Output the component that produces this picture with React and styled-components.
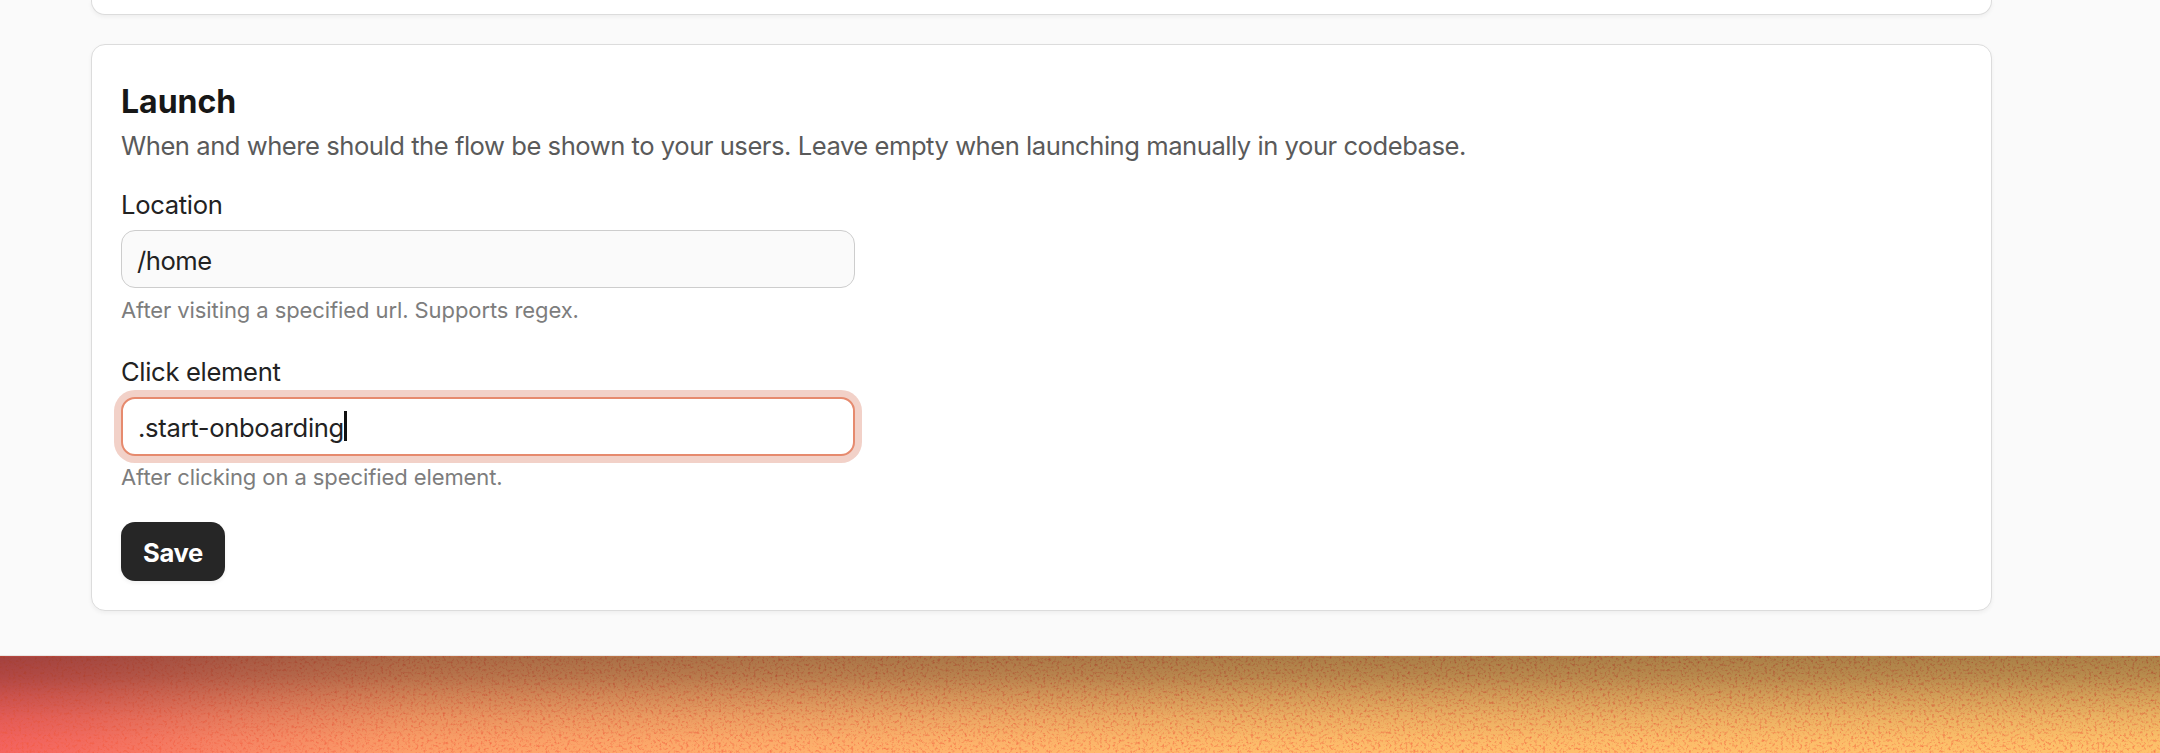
import React from "react";
import styled, { createGlobalStyle } from "styled-components";

const GlobalStyle = createGlobalStyle`
  *, *::before, *::after { box-sizing: border-box; }
  body {
    margin: 0;
    overflow: hidden;
    font-family: Inter, "Liberation Sans", sans-serif;
    color: #222;
  }
`;

const Desktop = styled.div`
  position: relative;
  display: flex;
  flex-direction: column;
  width: 2160px;
  height: 753px;
  overflow: hidden;
`;

const Window = styled.main`
  display: flex;
  flex-direction: column;
  gap: 29px;
  height: 656px;
  padding: 0 168px 0 91px;
  background: #fafafa;
  border-bottom: 1px solid #e9e6e4;
`;

const Card = styled.section`
  background: #fff;
  border: 1px solid #dcdcdc;
  border-radius: 14px;
  box-shadow: 0 2px 4px rgba(0, 0, 0, 0.05);
`;

const PreviousCard = styled(Card)`
  height: 15px;
  border-top: 0;
  border-radius: 0 0 14px 14px;
`;

const LaunchCard = styled(Card)`
  display: flex;
  flex-direction: column;
  align-items: flex-start;
  height: 567px;
  padding: 37px 29px 0;
`;

const Title = styled.h2`
  margin: 0;
  font-size: 32px;
  font-weight: 700;
  line-height: 40px;
  letter-spacing: 0;
  color: #171717;
`;

const Description = styled.p`
  margin: 3px 0 0;
  padding-top: 1px;
  font-size: 25.6px;
  line-height: 40px;
  letter-spacing: -0.47px;
  color: #5a5a5a;
  white-space: nowrap;
`;

const Field = styled.div`
  display: flex;
  flex-direction: column;
  margin-top: ${(p) => p.$gap}px;
`;

const Label = styled.label`
  font-size: 25.6px;
  line-height: 36px;
  letter-spacing: -0.33px;
`;

const TextBox = styled.div`
  display: flex;
  align-items: center;
  width: 734px;
  height: ${(p) => (p.$focused ? 59 : 58)}px;
  margin-top: 7px;
  padding: ${(p) => (p.$focused ? "1px 15px 0" : "3px 15px 0")};
  border: ${(p) => (p.$focused ? "2px solid #e68a6e" : "1px solid #cdcdcd")};
  border-radius: 14px;
  background: ${(p) => (p.$focused ? "#fff" : "#fafafa")};
  box-shadow: ${(p) => (p.$focused ? "0 0 0 7px #f2d1c8" : "none")};
  font-size: 25.6px;
  letter-spacing: ${(p) => (p.$focused ? "-0.32px" : "-0.45px")};
`;

const Caret = styled.span`
  width: 3px;
  height: 30px;
  margin: -3px 0 0 -0.5px;
  background: #111;
`;

const Hint = styled.p`
  margin: ${(p) => (p.$focused ? 6 : 7)}px 0 0;
  font-size: 22px;
  line-height: 30px;
  letter-spacing: -0.09px;
  color: #7d7d7d;
`;

const SaveButton = styled.button`
  width: 104px;
  height: 59px;
  margin-top: 30px;
  padding: 1px 0 0;
  border: 0;
  border-radius: 14px;
  background: #262626;
  box-shadow: 0 2px 4px rgba(0, 0, 0, 0.06);
  color: #fff;
  font: 700 25.6px Inter, "Liberation Sans", sans-serif;
  letter-spacing: -0.3px;
`;

const Wallpaper = styled.div`
  position: relative;
  height: 97px;
  background: linear-gradient(
    98deg,
    #f5625e 0,
    #f66c60 90px,
    #f98665 240px,
    #fd9f68 420px,
    #ffb06c 800px,
    #ffbd6b 1250px,
    #ffc36b 2160px
  );
`;

const Grain = styled.svg`
  display: block;
  width: 2160px;
  height: 97px;
`;

const WindowShadow = styled.div`
  position: absolute;
  inset: 0;
  border-top: 1px solid rgba(60, 20, 10, 0.35);
  background: linear-gradient(
    rgba(0, 0, 0, 0.33) 0,
    rgba(0, 0, 0, 0.28) 20%,
    rgba(0, 0, 0, 0.17) 42%,
    rgba(0, 0, 0, 0.08) 63%,
    rgba(0, 0, 0, 0.02) 85%,
    rgba(0, 0, 0, 0) 100%
  );
`;

function FormField({ gap, label, value, hint, focused }) {
  return (
    <Field $gap={gap}>
      <Label>{label}</Label>
      <TextBox $focused={focused}>
        <span>{value}</span>
        {focused && <Caret />}
      </TextBox>
      <Hint $focused={focused}>{hint}</Hint>
    </Field>
  );
}

export default function App() {
  return (
    <Desktop>
      <GlobalStyle />
      <Window>
        <PreviousCard />
        <LaunchCard>
          <Title>Launch</Title>
          <Description>
            When and where should the flow be shown to your users. Leave empty when launching manually in your codebase.
          </Description>
          <FormField gap={21} label="Location" value="/home" hint="After visiting a specified url. Supports regex." />
          <FormField
            gap={29}
            label="Click element"
            value=".start-onboarding"
            hint="After clicking on a specified element."
            focused
          />
          <SaveButton type="button">Save</SaveButton>
        </LaunchCard>
      </Window>
      <Wallpaper>
        <Grain aria-hidden="true">
          <filter id="grain" x="0" y="0" width="100%" height="100%" colorInterpolationFilters="sRGB">
            <feTurbulence type="fractalNoise" baseFrequency="0.37" numOctaves="3" seed="8" />
            <feColorMatrix values="0 0 0 0 0.96  0 0 0 0 0.34  0 0 0 0 0.22  1.7 0 0 0 -0.85" />
          </filter>
          <rect width="2160" height="97" filter="url(#grain)" />
        </Grain>
        <WindowShadow />
      </Wallpaper>
    </Desktop>
  );
}
